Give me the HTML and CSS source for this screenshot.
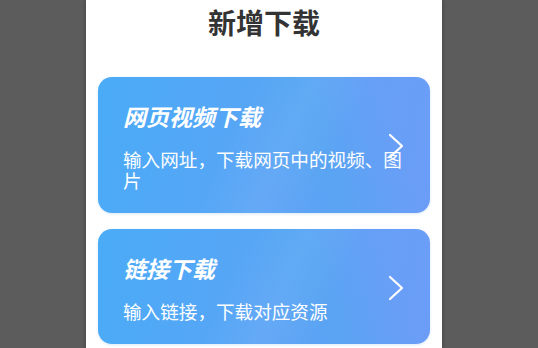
FILE: index.html
```html
<!DOCTYPE html>
<html lang="zh-CN">
<head>
<meta charset="utf-8">
<title>新增下载</title>
<link rel="stylesheet" href="styles.css">
</head>
<body>
<div class="panel">
  <h1 class="title">新增下载</h1>
  <div class="card">
    <div class="card-text">
      <div class="card-title">网页视频下载</div>
      <div class="card-sub">输入网址，下载网页中的视频、图片</div>
    </div>
    <svg class="chev" viewBox="0 0 16 26" width="16" height="26"><path d="M2 2 L14 13 L2 24" fill="none" stroke="#fff" stroke-width="2.2" stroke-linecap="round" stroke-linejoin="round"/></svg>
  </div>
  <div class="card">
    <div class="card-text">
      <div class="card-title">链接下载</div>
      <div class="card-sub">输入链接，下载对应资源</div>
    </div>
    <svg class="chev" viewBox="0 0 16 26" width="16" height="26"><path d="M2 2 L14 13 L2 24" fill="none" stroke="#fff" stroke-width="2.2" stroke-linecap="round" stroke-linejoin="round"/></svg>
  </div>
</div>
</body>
</html>
```
FILE: styles.css
```css
html, body {
  margin: 0;
  padding: 0;
  height: 100%;
  background: #5c5c5c;
  overflow: hidden;
}
body {
  font-family: "Noto Sans CJK SC", "Noto Sans", sans-serif;
}
.panel {
  width: 356px;
  margin-left: 86px;
  height: 100%;
  background: #fff;
  box-sizing: border-box;
  padding: 0 12px;
  box-shadow: 0 0 4px rgba(0,0,0,0.35);
}
.title {
  margin: 0;
  font-size: 28px;
  line-height: 44px;
  font-weight: 700;
  color: #333;
  text-align: center;
  padding-bottom: 33px;
}
.card {
  position: relative;
  border-radius: 14px;
  padding: 24px 22px 23px 25px;
  margin-bottom: 16px;
  background:
    linear-gradient(115deg, rgba(255,255,255,0) 40%, rgba(255,255,255,0.06) 55%, rgba(255,255,255,0) 70%),
    linear-gradient(70deg, rgba(80,175,240,0) 45%, rgba(70,170,235,0.35) 65%, rgba(80,175,240,0) 85%),
    linear-gradient(100deg, #4aabf6 0%, #56a6f6 40%, #66a0f7 75%, #6b9df7 100%);
  box-shadow: 0 1px 3px rgba(70,150,230,0.2);
  color: #fff;
}
.card-title {
  font-size: 23px;
  line-height: 30px;
  font-weight: 700;
  font-style: italic;
}
.card-sub {
  margin-top: 17px;
  font-size: 18.6px;
  line-height: 21px;
}
.chev {
  position: absolute;
  right: 26px;
  top: 50%;
  margin-top: -12px;
}
```
